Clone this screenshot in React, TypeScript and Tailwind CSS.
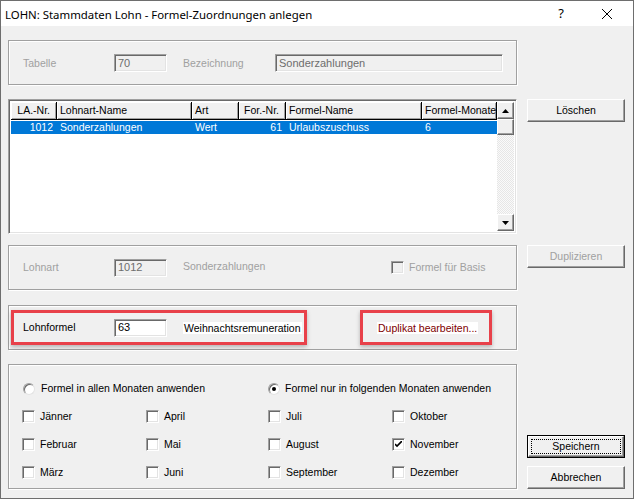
import React from "react";

const raised =
  "bg-[#f0f0f0] border border-t-white border-l-white border-r-[#696969] border-b-[#696969] shadow-[inset_-1px_-1px_0_#a0a0a0]";
const sunken =
  "border border-t-[#a0a0a0] border-l-[#a0a0a0] border-r-white border-b-white shadow-[inset_1px_1px_0_#696969,inset_-1px_-1px_0_#e3e3e3]";
const group = "border border-[#a0a0a0] shadow-[inset_1px_1px_0_#fff,1px_1px_0_#fff]";

function Field({ value, disabled = true, w = "w-[53px]" }: { value: string; disabled?: boolean; w?: string }) {
  return (
    <div
      className={`${sunken} ${w} h-[18px] shrink-0 flex items-center pl-[3px] leading-none text-[11px] ${
        disabled ? "bg-[#f0f0f0] text-[#6d6d6d]" : "bg-white text-black"
      }`}
    >
      {value}
    </div>
  );
}

function Check({ checked = false, disabled = false }: { checked?: boolean; disabled?: boolean }) {
  return (
    <div
      className={`${sunken} w-[13px] h-[13px] shrink-0 flex items-center justify-center ${
        disabled ? "bg-[#f0f0f0]" : "bg-white"
      }`}
    >
      {checked && (
        <svg width="7" height="7" viewBox="0 0 7 7">
          <path d="M0 3 L2 5 L7 0" stroke="#000" strokeWidth="1.6" fill="none" />
        </svg>
      )}
    </div>
  );
}

function Radio({ checked = false }: { checked?: boolean }) {
  return (
    <div className="w-[12px] h-[12px] rounded-full border border-t-[#a0a0a0] border-l-[#a0a0a0] border-r-[#e3e3e3] border-b-[#e3e3e3] bg-white shrink-0 flex items-center justify-center shadow-[inset_1px_1px_0_#696969]">
      {checked && <div className="w-[4px] h-[4px] rounded-full bg-black" />}
    </div>
  );
}

function Button({ label, disabled = false, isDefault = false }: { label: string; disabled?: boolean; isDefault?: boolean }) {
  if (isDefault) {
    return (
      <div className="w-[98px] h-[23px] border border-black">
        <div className={`${raised} w-full h-full flex items-center justify-center p-[2px]`}>
          <div className="w-full h-full border border-dotted border-black flex items-center justify-center">{label}</div>
        </div>
      </div>
    );
  }
  return (
    <div
      className={`${raised} w-[98px] h-[23px] flex items-center justify-center ${
        disabled ? "text-[#a0a0a0]" : "text-black"
      }`}
    >
      {label}
    </div>
  );
}

const columns = [
  { name: "LA.-Nr.", w: "w-[46px]", right: true, value: "1012" },
  { name: "Lohnart-Name", w: "w-[135px]", right: false, value: "Sonderzahlungen" },
  { name: "Art", w: "w-[47px]", right: false, value: "Wert" },
  { name: "For.-Nr.", w: "w-[47px]", right: true, value: "61" },
  { name: "Formel-Name", w: "w-[136px]", right: false, value: "Urlaubszuschuss" },
  { name: "Formel-Monate", w: "w-[75px]", right: false, value: "6" },
];

const months = [
  ["Jänner", "April", "Juli", "Oktober"],
  ["Februar", "Mai", "August", "November"],
  ["März", "Juni", "September", "Dezember"],
];

function ScrollArrow({ up }: { up: boolean }) {
  return (
    <div className={`${raised} w-[17px] h-[17px] flex items-center justify-center`}>
      <svg width="7" height="4" viewBox="0 0 7 4">
        <path d={up ? "M0 4 L3.5 0 L7 4 Z" : "M0 0 L3.5 4 L7 0 Z"} fill="#000" />
      </svg>
    </div>
  );
}

export default function App() {
  return (
    <div className="w-[634px] h-[499px] bg-[#f0f0f0] border border-[#6e6e6e] flex flex-col font-['Liberation_Sans',Arial,sans-serif] text-[10.5px] leading-[13px] text-black overflow-hidden">
      {/* Title bar */}
      <div className="h-[25px] bg-white flex items-center shrink-0">
        <div className="pl-[4px] text-[11.4px] font-['Noto_Sans',sans-serif] flex-1 pt-[1px]">
          LOHN: Stammdaten Lohn - Formel-Zuordnungen anlegen
        </div>
        <div className="w-[46px] text-center text-[13px] font-['Noto_Sans',sans-serif]">?</div>
        <div className="w-[46px] flex items-center justify-center mr-[3px]">
          <svg width="10" height="10" viewBox="0 0 10 10">
            <path d="M0 0 L10 10 M10 0 L0 10" stroke="#000" strokeWidth="1" />
          </svg>
        </div>
      </div>

      <div className="pl-[7px] pt-[14px] flex flex-col">
        {/* Tabelle */}
        <div className={`${group} w-[509px] h-[45px] flex items-center text-[#a0a0a0] pt-[1px]`}>
          <span className="w-[105px] pl-[14px]">Tabelle</span>
          <Field value="70" />
          <span className="w-[108px] pl-[16px]">Bezeichnung</span>
          <Field value="Sonderzahlungen" w="w-[228px]" />
        </div>

        {/* List */}
        <div className="flex gap-[10px] mt-[14px]">
          <div className={`${sunken} w-[509px] h-[135px] bg-white p-[2px] flex`}>
            <div className="flex-1 flex flex-col">
              <div className="flex h-[18px] bg-[#f0f0f0]">
                {columns.map((c) => (
                  <div
                    key={c.name}
                    className={`${c.w} border-r border-b border-black shadow-[inset_1px_1px_0_#fff,inset_-1px_-1px_0_#a0a0a0] flex items-center whitespace-nowrap overflow-hidden ${
                      c.right ? "justify-end pr-[6px]" : "pl-[3px]"
                    }`}
                  >
                    {c.name}
                  </div>
                ))}
              </div>
              <div className="flex h-[13px] bg-[#0078d7] text-white mt-[1px]">
                {columns.map((c) => (
                  <div
                    key={c.name}
                    className={`${c.w} flex items-center whitespace-nowrap ${c.right ? "justify-end pr-[4px]" : "pl-[3px]"}`}
                  >
                    {c.value}
                  </div>
                ))}
              </div>
            </div>
            <div className="w-[17px] flex flex-col bg-[repeating-conic-gradient(#e6e6e6_0_25%,#fafafa_0_50%)] bg-[length:2px_2px]">
              <ScrollArrow up />
              <div className={`${raised} w-[17px] h-[16px]`} />
              <div className="flex-1" />
              <ScrollArrow up={false} />
            </div>
          </div>
          <Button label="Löschen" />
        </div>

        {/* Lohnart */}
        <div className="flex gap-[10px] mt-[11px]">
          <div className={`${group} w-[509px] h-[45px] flex items-center text-[#a0a0a0]`}>
            <span className="w-[105px] pl-[14px]">Lohnart</span>
            <Field value="1012" />
            <span className="w-[224px] pl-[16px] -mt-[2px]">Sonderzahlungen</span>
            <div className="flex items-center gap-[5px]">
              <Check disabled />
              <span>Formel für Basis</span>
            </div>
          </div>
          <Button label="Duplizieren" disabled />
        </div>

        {/* Lohnformel */}
        <div className={`${group} w-[509px] h-[45px] mt-[15px] flex items-center`}>
          <div className="ml-[2px] h-[35px] w-[296px] border-[3px] border-[#e8414a] shadow-[0_2px_4px_rgba(0,0,0,0.25)] flex items-center">
            <span className="w-[100px] pl-[9px]">Lohnformel</span>
            <Field value="63" disabled={false} />
            <span className="ml-[16px] bg-white px-[1px] leading-[12px]">Weihnachtsremuneration</span>
          </div>
          <div className="ml-[53px] h-[35px] w-[132px] border-[3px] border-[#e8414a] shadow-[0_2px_4px_rgba(0,0,0,0.25)] flex items-center">
            <span className="ml-[14px] bg-white text-[#800000] px-[1px] leading-[12px]">Duplikat bearbeiten...</span>
          </div>
        </div>

        {/* Monate */}
        <div className="flex gap-[10px] mt-[14px]">
          <div className={`${group} w-[509px] h-[125px] flex flex-col pl-[13px] pt-[17px]`}>
            <div className="flex items-center h-[13px]">
              <div className="w-[246px] flex items-center gap-[6px] pl-[1px]">
                <Radio />
                <span>Formel in allen Monaten anwenden</span>
              </div>
              <div className="flex items-center gap-[5px]">
                <Radio checked />
                <span>Formel nur in folgenden Monaten anwenden</span>
              </div>
            </div>
            {months.map((row, i) => (
              <div key={i} className="flex items-center h-[13px] mt-[15px]">
                {row.map((m, j) => (
                  <div
                    key={m}
                    className={`flex items-center gap-[5px] ${
                      j === 0 ? "w-[124px]" : j === 1 ? "w-[122px]" : "w-[124px]"
                    }`}
                  >
                    <Check checked={m === "November"} />
                    <span>{m}</span>
                  </div>
                ))}
              </div>
            ))}
          </div>
          <div className="flex flex-col justify-end gap-[8px]">
            <Button label="Speichern" isDefault />
            <Button label="Abbrechen" />
          </div>
        </div>
      </div>
    </div>
  );
}
